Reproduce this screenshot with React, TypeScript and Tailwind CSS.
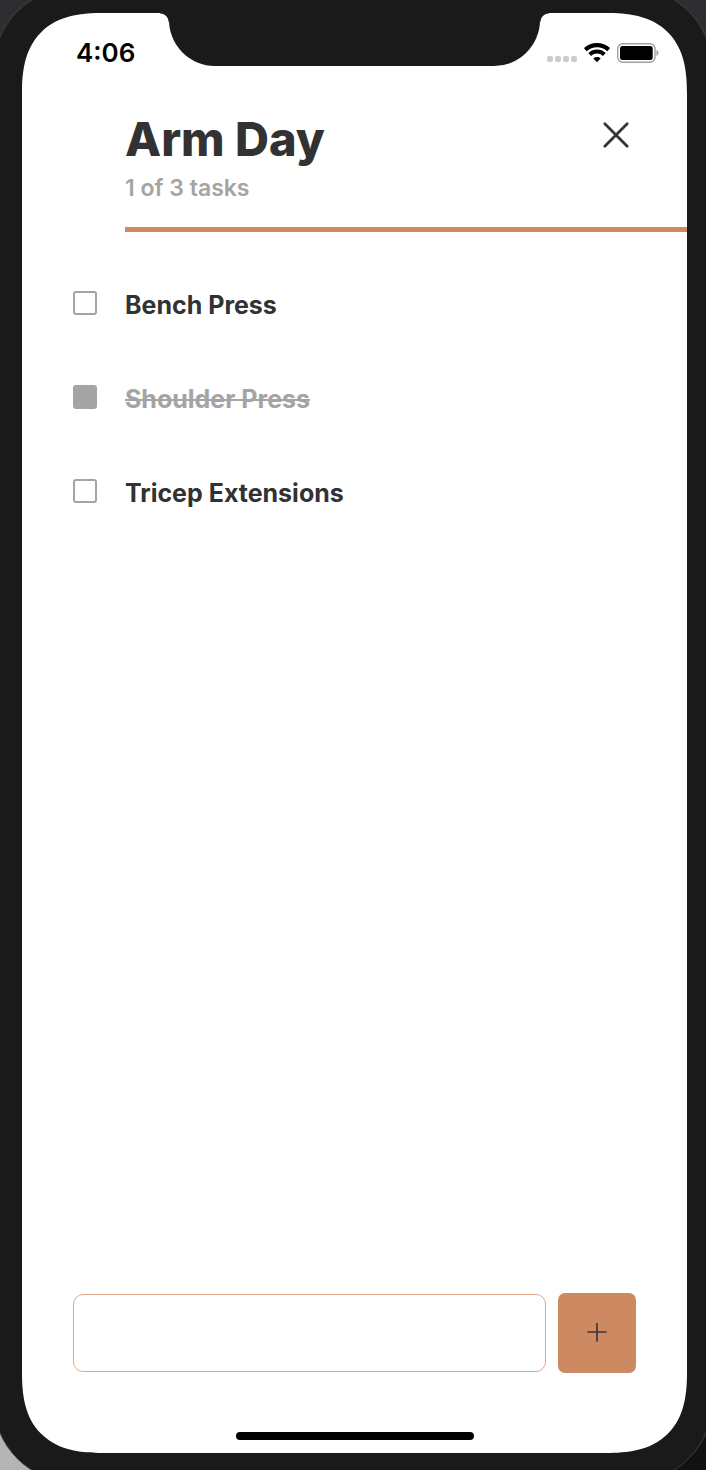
import { useState } from "react";
import type { FormEvent } from "react";

type Task = { id: number; title: string; completed: boolean };

const initialTasks: Task[] = [
  { id: 1, title: "Bench Press", completed: false },
  { id: 2, title: "Shoulder Press", completed: true },
  { id: 3, title: "Tricep Extensions", completed: false },
];

function Notch() {
  return (
    <div aria-hidden="true" className="absolute inset-x-0 top-0 flex items-start justify-center">
      <div className="size-[9px] bg-[radial-gradient(circle_at_0%_100%,transparent_8px,#1a1a1a_9px)]" />
      <div className="h-[53px] w-[371px] rounded-b-[46px] bg-[#1a1a1a]" />
      <div className="size-[9px] bg-[radial-gradient(circle_at_100%_100%,transparent_8px,#1a1a1a_9px)]" />
    </div>
  );
}

function StatusBar() {
  return (
    <div className="flex h-[80px] items-center justify-between pr-7 pl-[54px]">
      <span className="text-[26px] leading-8 font-semibold text-black">4:06</span>
      <div className="flex items-center gap-[7px]">
        <div className="flex h-[18px] items-end gap-[2px]">
          <i className="size-[6px] rounded-[2px] bg-[#cccccc]" />
          <i className="size-[6px] rounded-[2px] bg-[#cccccc]" />
          <i className="size-[6px] rounded-[2px] bg-[#cccccc]" />
          <i className="size-[6px] rounded-[2px] bg-[#cccccc]" />
        </div>
        <svg width="26" height="20" viewBox="0 0 26 20" fill="none" aria-hidden="true">
          <path d="M1.300 6.600C8 .6 18 .6 24.700 6.600" stroke="#000" strokeWidth="4.200" />
          <path d="M5.700 11.400c4.200-3.800 10.400-3.800 14.600 0" stroke="#000" strokeWidth="4" />
          <path d="M13 19.200 9.300 15.400c2.200-1.900 5.200-1.900 7.400 0z" fill="#000" />
        </svg>
        <svg width="42" height="20" viewBox="0 0 42 20" fill="none" aria-hidden="true">
          <rect x=".7" y=".7" width="37.300" height="18.600" rx="5" stroke="#a0a0a0" strokeWidth="1.400" />
          <rect x="3" y="3" width="32.700" height="14" rx="2.500" fill="#000" />
          <path d="M39.500 7c2.600.8 2.600 5.200 0 6z" fill="#a0a0a0" />
        </svg>
      </div>
    </div>
  );
}

export default function App() {
  const [tasks, setTasks] = useState<Task[]>(initialTasks);
  const [title, setTitle] = useState("");
  const done = tasks.filter((task) => task.completed).length;

  const toggle = (id: number) =>
    setTasks(tasks.map((task) => (task.id === id ? { ...task, completed: !task.completed } : task)));

  const addTask = (event: FormEvent) => {
    event.preventDefault();
    if (!title.trim()) return;
    setTasks([...tasks, { id: Date.now(), title: title.trim(), completed: false }]);
    setTitle("");
  };

  return (
    <div className="flex min-h-screen overflow-hidden bg-[#2c2e31] bg-[radial-gradient(circle_at_bottom_left,#b4b4b4_60px,transparent_200px),radial-gradient(circle_at_bottom_right,#111111_60px,transparent_200px)] font-['Inter','Liberation_Sans',sans-serif]">
      <div className="-mx-[7px] -my-[13px] flex flex-1 rounded-[82px] border border-[#404040] bg-[#1a1a1a] pt-[25px] pr-[25px] pb-[29px] pl-[28px]">
        <main className="relative flex flex-1 flex-col overflow-hidden rounded-[81px] bg-white [corner-shape:superellipse(1.36)]">
          <Notch />
          <StatusBar />

          <header className="ml-[103px] border-b-[5px] border-[#cd8962] pt-5 pb-6">
            <div className="flex items-start justify-between pr-[57px]">
              <h1 className="text-[47px] leading-[52px] font-extrabold text-[#323232]">Arm Day</h1>
              <button type="button" aria-label="Close" className="mt-[8px]">
                <svg width="28" height="28" viewBox="0 0 28 28" fill="none" stroke="#323437" strokeWidth="2.800" strokeLinecap="round">
                  <path d="M2.800 2.800 25.200 25.200M25.200 2.800 2.800 25.200" />
                </svg>
              </button>
            </div>
            <p className="mt-[9px] text-[23px] leading-[29px] font-semibold text-[#a4a4a4]">
              {`${done} of ${tasks.length} tasks`}
            </p>
          </header>

          <ul className="flex-1 px-[51px] pt-6">
            {tasks.map((task) => (
              <li key={task.id}>
                <label className="flex h-[94px] items-center gap-7">
                  <input
                    type="checkbox"
                    checked={task.completed}
                    onChange={() => toggle(task.id)}
                    className="size-6 shrink-0 appearance-none rounded-[3px] border-2 border-[#a4a4a4] bg-white checked:bg-[#a4a4a4]"
                  />
                  <span
                    className={
                      task.completed
                        ? "pt-[3px] text-[25px] leading-8 font-bold text-[#a4a4a4] line-through decoration-2"
                        : "pt-[3px] text-[25px] leading-8 font-bold text-[#323232]"
                    }
                  >
                    {task.title}
                  </span>
                </label>
              </li>
            ))}
          </ul>

          <form onSubmit={addTask} className="flex items-center gap-3 px-[51px] pb-[59px]">
            <input
              type="text"
              aria-label="New task"
              value={title}
              onChange={(event) => setTitle(event.target.value)}
              className="h-[78px] min-w-0 flex-1 rounded-[10px] border border-[#e0a688] px-4 text-[26px] text-[#323232] outline-none"
            />
            <button
              type="submit"
              aria-label="Add task"
              className="flex h-20 w-[78px] items-center justify-center rounded-[7px] bg-[#cd8962]"
            >
              <svg width="20" height="20" viewBox="0 0 20 20" fill="none" stroke="#3d3835" strokeWidth="1.700" strokeLinecap="round">
                <path d="M10 0v18M1 9h18" />
              </svg>
            </button>
          </form>

          <div aria-hidden="true" className="mx-auto mb-[13px] h-2 w-[238px] rounded-full bg-black" />
        </main>
      </div>
    </div>
  );
}
